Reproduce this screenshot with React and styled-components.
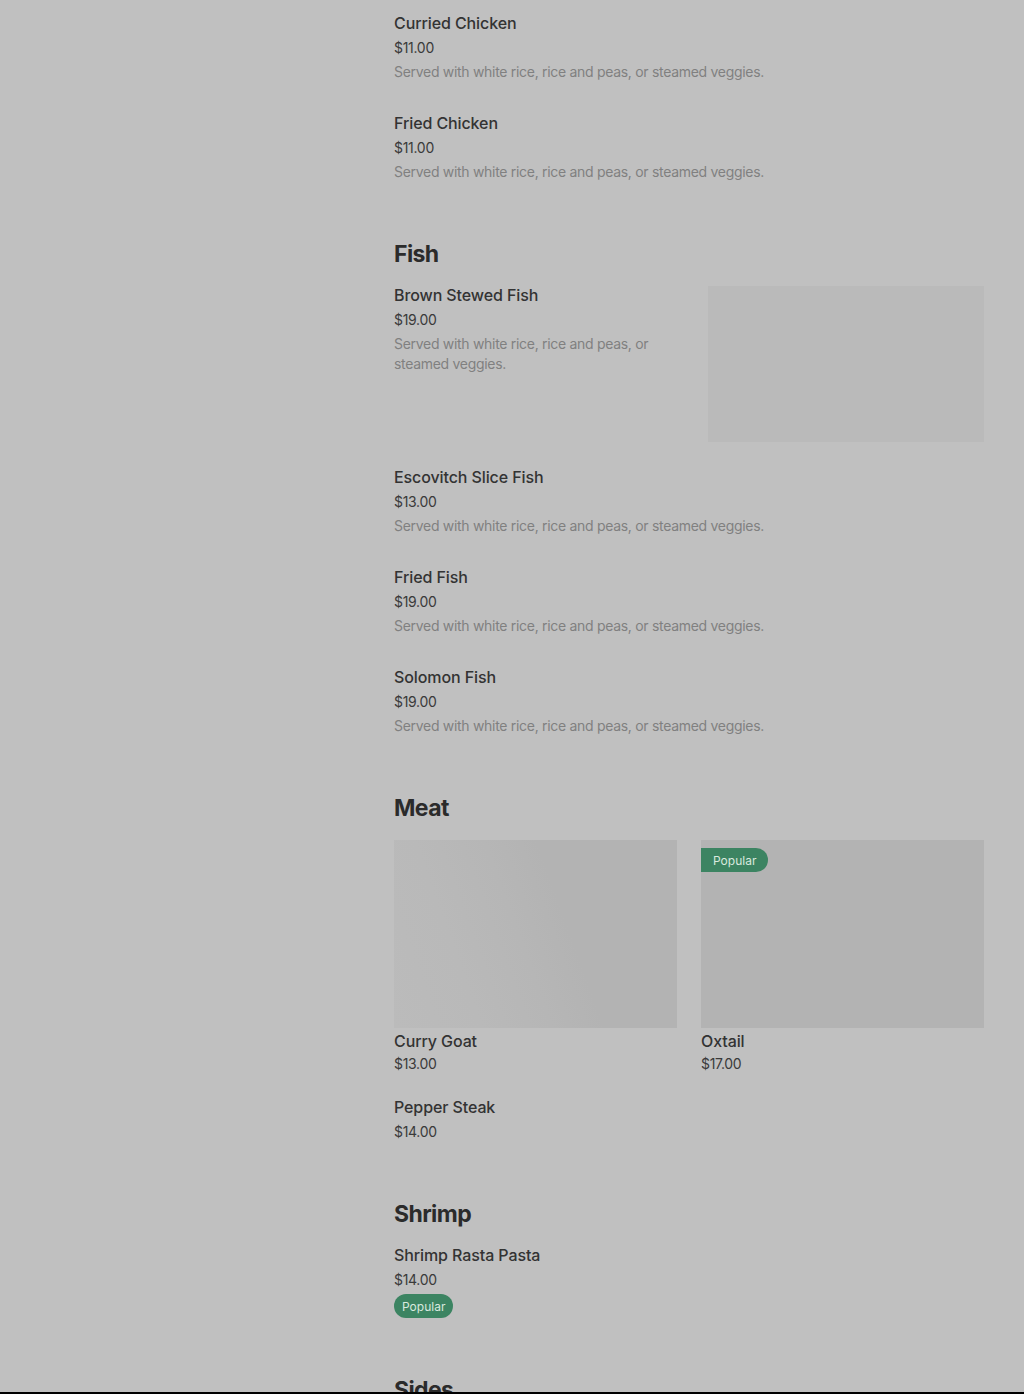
import styled, { createGlobalStyle } from 'styled-components'

const GlobalStyle = createGlobalStyle`
  body {
    margin: 0;
    background: #c0c0c0;
    font-family: Inter, "Noto Sans", sans-serif;
    color: #2f2f2f;
  }
`

const DESC = 'Served with white rice, rice and peas, or steamed veggies.'

const sections = [
  {
    id: 'chicken',
    items: [
      { name: 'Curried Chicken', price: '$11.00', desc: DESC },
      { name: 'Fried Chicken', price: '$11.00', desc: DESC }
    ]
  },
  {
    id: 'fish',
    title: 'Fish',
    items: [
      { name: 'Brown Stewed Fish', price: '$19.00', desc: DESC, image: true },
      { name: 'Escovitch Slice Fish', price: '$13.00', desc: DESC },
      { name: 'Fried Fish', price: '$19.00', desc: DESC },
      { name: 'Solomon Fish', price: '$19.00', desc: DESC }
    ]
  },
  {
    id: 'meat',
    title: 'Meat',
    cards: [
      { name: 'Curry Goat', price: '$13.00', shimmer: true },
      { name: 'Oxtail', price: '$17.00', popular: true }
    ],
    items: [{ name: 'Pepper Steak', price: '$14.00' }]
  },
  {
    id: 'shrimp',
    title: 'Shrimp',
    items: [{ name: 'Shrimp Rasta Pasta', price: '$14.00', popular: true }]
  },
  { id: 'sides', title: 'Sides', items: [] }
]

const App = () => {
  return (
    <>
      <GlobalStyle />
      <Page>
        <Sidebar />
        <Menu>
          {sections.map((s) => (
            <Section key={s.id} $first={!s.title}>
              {s.title && <SectionTitle>{s.title}</SectionTitle>}

              {s.cards && (
                <CardGrid>
                  {s.cards.map((c) => (
                    <Card key={c.name}>
                      <CardImage $shimmer={c.shimmer}>
                        {c.popular && <CornerBadge>Popular</CornerBadge>}
                      </CardImage>
                      <ItemName>{c.name}</ItemName>
                      <Price>{c.price}</Price>
                    </Card>
                  ))}
                </CardGrid>
              )}

              {s.items.map((item) => (
                <Item key={item.name}>
                  <ItemText $narrow={item.image}>
                    <ItemName>{item.name}</ItemName>
                    <Price>{item.price}</Price>
                    {item.desc && <Desc>{item.desc}</Desc>}
                    {item.popular && <Badge>Popular</Badge>}
                  </ItemText>
                  {item.image && <Thumb />}
                </Item>
              ))}
            </Section>
          ))}
        </Menu>
      </Page>
    </>
  )
}

export default App

// ---------- styled-components ----------

const Page = styled.div`
  height: 1392px;
  overflow: hidden;
  border-bottom: 2px solid #000;
  display: grid;
  grid-template-columns: 394px 590px;
`

const Sidebar = styled.aside``

const Menu = styled.main`
  display: flex;
  flex-direction: column;
`

const Section = styled.section`
  margin-top: ${(p) => (p.$first ? '0' : '38px')};
`

const SectionTitle = styled.h2`
  margin: 0 0 2px;
  font-size: 23px;
  line-height: 32px;
  font-weight: 700;
  letter-spacing: -0.6px;
  color: #2b2b2b;
`

const Item = styled.div`
  display: flex;
  justify-content: space-between;
  gap: 24px;
  padding: 11px 0 18px;
`

const ItemText = styled.div`
  display: flex;
  flex-direction: column;
  align-items: flex-start;
  max-width: ${(p) => (p.$narrow ? '290px' : 'none')};
`

const ItemName = styled.div`
  font-size: 16px;
  line-height: 24px;
  font-weight: 500;
  letter-spacing: -0.1px;
  color: #333333;
`

const Price = styled.div`
  margin-top: 3px;
  font-size: 14px;
  line-height: 20px;
  color: #3a3a3a;
  letter-spacing: -0.3px;
`

const Desc = styled.div`
  margin-top: 4px;
  font-size: 14px;
  line-height: 20px;
  letter-spacing: -0.3px;
  color: #808080;
`

const Thumb = styled.div`
  width: 276px;
  height: 156px;
  margin-top: 3px;
  margin-bottom: -6px;
  flex-shrink: 0;
  background: #bababa;
`

const Badge = styled.span`
  margin-top: 4px;
  height: 24px;
  padding: 0 8px;
  display: inline-flex;
  align-items: center;
  border-radius: 12px;
  background: #3c8462;
  color: #d9e9df;
  font-size: 12px;
`

const CardGrid = styled.div`
  display: grid;
  grid-template-columns: 1fr 1fr;
  gap: 24px;
  padding: 14px 0 10px;
`

const Card = styled.div`
  display: flex;
  flex-direction: column;

  ${Price} {
    margin-top: 1px;
  }
`

const CardImage = styled.div`
  position: relative;
  height: 188px;
  margin-bottom: 1px;
  background: ${(p) =>
    p.$shimmer
      ? 'linear-gradient(70deg, #bbbbbb 0%, #b9b9b9 25%, #b6b6b6 45%, #b3b3b3 60%, #b3b3b3 100%)'
      : '#b3b3b3'};
`

const CornerBadge = styled.span`
  position: absolute;
  top: 8px;
  left: 0;
  height: 24px;
  padding: 0 12px;
  display: inline-flex;
  align-items: center;
  border-radius: 0 12px 12px 0;
  background: #3c8462;
  color: #d9e9df;
  font-size: 12px;
`
